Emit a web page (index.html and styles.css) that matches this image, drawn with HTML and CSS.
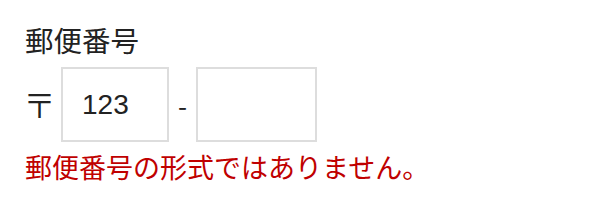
FILE: index.html
```html
<!DOCTYPE html>
<html>
<head>
    <meta charset="utf-8">
    <title>郵便番号</title>
    <link rel="stylesheet" href="styles.css">
</head>
<body>
    <div class="form">
        <label class="label" for="zip1">郵便番号</label>
        <div class="zip-row">
            <span class="mark">〒</span>
            <input class="zip zip-first" id="zip1" type="text" value="123">
            <span class="dash">-</span>
            <input class="zip zip-second" id="zip2" type="text" value="">
        </div>
        <p class="error">郵便番号の形式ではありません。</p>
    </div>
</body>
</html>
```

FILE: styles.css
```css
* {
    box-sizing: border-box;
    margin: 0;
    padding: 0;
}

body {
    font-family: 'Noto Sans CJK JP', 'Liberation Sans', sans-serif;
    background: #fff;
    color: #222;
}

.form {
    padding: 21px 25px 0;
}

.label {
    display: block;
    font-size: 28.5px;
    line-height: 37px;
}

.zip-row {
    display: flex;
    align-items: center;
    margin-top: 9px;
}

.mark {
    font-size: 33px;
    font-weight: 300;
    line-height: 1;
    width: 36px;
    margin-left: -2px;
    margin-right: 2px;
}

.dash {
    font-size: 26px;
    width: 27px;
    text-align: center;
}

.zip {
    height: 75px;
    border: 2px solid #ddd;
    background: #fff;
    font-family: 'Liberation Sans', 'Noto Sans CJK JP', sans-serif;
    font-size: 28px;
    color: #222;
    padding: 0 19px;
    outline: none;
}

.zip-first {
    width: 108px;
}

.zip-second {
    width: 121px;
}

.error {
    color: #c00000;
    font-size: 27px;
    line-height: 32px;
    margin-top: 9px;
}
```
